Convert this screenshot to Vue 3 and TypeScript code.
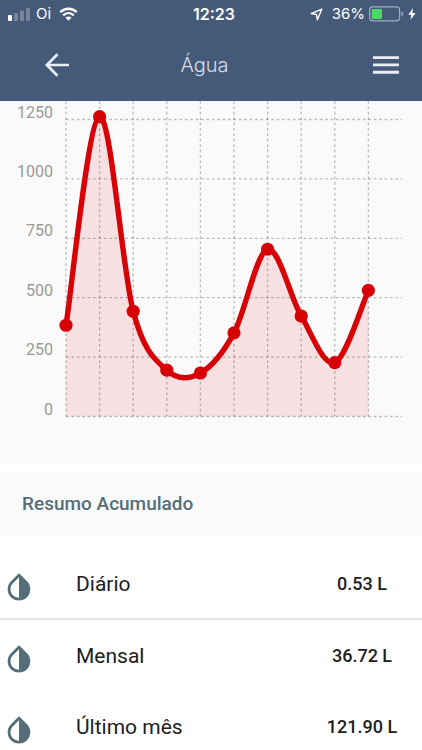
<script setup lang="ts">
interface Point {
  x: number
  y: number
}

interface SummaryRow {
  label: string
  value: string
}

const chart = { left: 66, right: 402, top: 0, base: 315.5, step: 59.4 }
const ticks = [0, 250, 500, 750, 1000, 1250]
const readings = [384, 1262, 443, 195, 183, 352, 704, 423, 227, 531]

const columnWidth = (chart.right - chart.left) / readings.length
const scaleY = (value: number): number => chart.base - (value / 250) * chart.step

const points: Point[] = readings.map((value, i) => ({
  x: chart.left + i * columnWidth,
  y: scaleY(value),
}))

// Catmull-Rom spline through every reading, written as cubic segments
function spline(list: Point[]): string {
  let d = `M${list[0].x},${list[0].y}`
  for (let i = 0; i < list.length - 1; i++) {
    const before = list[Math.max(i - 1, 0)]
    const from = list[i]
    const to = list[i + 1]
    const after = list[Math.min(i + 2, list.length - 1)]
    d += `C${from.x + (to.x - before.x) / 6},${from.y + (to.y - before.y) / 6}`
    d += ` ${to.x - (after.x - from.x) / 6},${to.y - (after.y - from.y) / 6}`
    d += ` ${to.x},${to.y}`
  }
  return d
}

const linePath = spline(points)
const areaPath = `${linePath}V${chart.base}H${chart.left}Z`

const rows: SummaryRow[] = [
  { label: 'Diário', value: '0.53 L' },
  { label: 'Mensal', value: '36.72 L' },
  { label: 'Último mês', value: '121.90 L' },
]
</script>

<template>
  <div class="app">
    <header class="header">
      <div class="status">
        <div class="status-left">
          <svg class="signal" width="22" height="14" viewBox="0 0 22 14" aria-hidden="true">
            <rect x="0" y="8" width="4" height="6" rx="1" fill="#fff" />
            <rect x="6" y="6" width="4" height="8" rx="1" fill="#fff" opacity=".27" />
            <rect x="12" y="3.5" width="4" height="10.5" rx="1" fill="#fff" opacity=".27" />
            <rect x="18" y="1" width="4" height="13" rx="1" fill="#fff" opacity=".27" />
          </svg>
          <span>Oi</span>
          <svg class="wifi" width="19" height="14" viewBox="0 0 19 14" aria-hidden="true">
            <g fill="none" stroke="#fff" stroke-width="2.4">
              <path d="M1.2 5.2C5.9.6 13.1.6 17.8 5.2" />
              <path d="M4.2 8.3C7.3 5.4 11.7 5.4 14.8 8.3" />
            </g>
            <path d="M6.5 10.7C8.3 9.2 10.7 9.2 12.5 10.7L9.5 13.8Z" fill="#fff" />
          </svg>
        </div>
        <span class="clock">12:23</span>
        <div class="status-right">
          <svg width="13" height="13" viewBox="0 0 13 13" aria-hidden="true">
            <path d="M11.8 1.2L1.2 5.6L6.5 6.5L7.3 11.8Z" fill="none" stroke="#fff" stroke-width="1.4" stroke-linejoin="round" />
          </svg>
          <span class="percent">36%</span>
          <svg width="35" height="16" viewBox="0 0 35 16" aria-hidden="true">
            <rect x=".6" y=".9" width="30" height="14" rx="3.4" fill="none" stroke="#fff" stroke-width="1.2" opacity=".5" />
            <rect x="2.6" y="2.9" width="10.4" height="10" rx="1.4" fill="#4cd964" />
            <path d="M32.4 5.6C34.6 6.4 34.6 9.4 32.4 10.2Z" fill="#fff" opacity=".5" />
          </svg>
          <svg width="8" height="12" viewBox="0 0 8 12" aria-hidden="true">
            <path d="M5 0L.4 6.7H3.4L2.4 12L7.6 4.9H4.4Z" fill="#fff" />
          </svg>
        </div>
      </div>
      <nav class="toolbar">
        <button class="icon-button" type="button" aria-label="Voltar">
          <svg width="24" height="24" viewBox="0 0 24 24" aria-hidden="true">
            <path d="M12.5 1.3L1.8 12L12.5 22.7M2 12H24" fill="none" stroke="#e9eef6" stroke-width="2.7" />
          </svg>
        </button>
        <h1 class="title">Água</h1>
        <button class="icon-button" type="button" aria-label="Menu">
          <svg width="26" height="18" viewBox="0 0 26 18" aria-hidden="true">
            <path d="M0 1.6H26M0 8.9H26M0 16.2H26" stroke="#e9eef6" stroke-width="2.9" />
          </svg>
        </button>
      </nav>
    </header>

    <main class="content">
      <section class="chart-card">
        <svg class="chart" viewBox="0 0 422 362" role="img" aria-label="Água">
          <path :d="areaPath" class="area" />
          <g class="grid">
            <line v-for="tick in ticks" :key="'h' + tick" :x1="chart.left" :x2="chart.right" :y1="scaleY(tick)" :y2="scaleY(tick)" />
            <line v-for="point in points" :key="'v' + point.x" :x1="point.x" :x2="point.x" :y1="chart.top" :y2="chart.base" />
          </g>
          <text v-for="tick in ticks" :key="tick" class="tick" x="53" :y="scaleY(tick) - 2">{{ tick }}</text>
          <path :d="linePath" class="line" />
          <circle v-for="point in points" :key="point.x" :cx="point.x" :cy="point.y" r="6.6" class="dot" />
        </svg>
      </section>

      <section class="summary">
        <h2 class="summary-title">Resumo Acumulado</h2>
        <ul class="list">
          <li v-for="row in rows" :key="row.label" class="row">
            <svg class="drop" width="34" height="34" viewBox="0 0 24 24" aria-hidden="true">
              <path
                fill="#546e7a"
                d="M17.66 7.93L12 2.27 6.34 7.93c-3.12 3.12-3.12 8.19 0 11.31C7.9 20.8 9.95 21.58 12 21.58c2.05 0 4.1-.78 5.66-2.34 3.12-3.12 3.12-8.19 0-11.31zM12 19.59c-1.6 0-3.11-.62-4.24-1.76C6.62 16.69 6 15.19 6 13.59s.62-3.11 1.76-4.24L12 5.1v14.49z"
              />
            </svg>
            <span class="row-label">{{ row.label }}</span>
            <span class="row-value">{{ row.value }}</span>
          </li>
        </ul>
      </section>
    </main>
  </div>
</template>

<style>
body {
  margin: 0;
  background: #fff;
}
</style>

<style scoped>
.app {
  display: flex;
  flex-direction: column;
  height: 100vh;
  font-family: Roboto, "Liberation Sans", sans-serif;
  color: #212121;
}

.header {
  flex: none;
  background: #455a79;
  color: #fff;
  font-family: Inter, "Liberation Sans", sans-serif;
}

.status {
  display: grid;
  grid-template-columns: 1fr auto 1fr;
  align-items: center;
  height: 28px;
  padding: 0 6px 0 8px;
  font-size: 16px;
  line-height: 20px;
}

.status-left,
.status-right {
  display: flex;
  align-items: center;
  font-size: 15px;
}

.status-left {
  gap: 6px;
}

.wifi {
  margin-left: 2px;
}

.status-right {
  justify-content: flex-end;
  gap: 4px;
}

.percent {
  margin-left: 5px;
}

.clock {
  padding-left: 4px;
  font-weight: 600;
}

.toolbar {
  display: grid;
  grid-template-columns: 48px 1fr 48px;
  align-items: center;
  height: 73px;
  padding: 0 12px 0 33px;
}

.icon-button {
  display: flex;
  align-items: center;
  justify-content: center;
  height: 48px;
  padding: 0;
  border: 0;
  background: none;
}

.title {
  margin: 0;
  padding-right: 34px;
  text-align: center;
  font-size: 20px;
  line-height: 28px;
  font-weight: 300;
  color: #d5deeb;
}

.content {
  flex: 1;
  min-height: 0;
  overflow-y: auto;
  scrollbar-width: none;
}

.chart-card {
  background: #fafafa;
}

.chart {
  display: block;
  width: 100%;
}

.area {
  fill: #d70206;
  fill-opacity: 0.1;
}

.grid {
  stroke: #000;
  stroke-opacity: 0.25;
  stroke-width: 1.3;
  stroke-dasharray: 2.7;
}

.tick {
  fill: #999;
  font-size: 16px;
  text-anchor: end;
}

.line {
  fill: none;
  stroke: #d70206;
  stroke-width: 5.4;
}

.dot {
  fill: #d70206;
}

.summary {
  margin-top: 10px;
}

.summary-title {
  margin: 0;
  padding: 19px 22px;
  background: #fafafa;
  color: #546e7a;
  font-size: 19px;
  line-height: 24px;
  font-weight: 500;
}

.list {
  margin: 0;
  padding: 14px 0;
  list-style: none;
}

.row {
  display: grid;
  grid-template-columns: 76px 1fr 120px;
  align-items: center;
  box-sizing: border-box;
  height: 71px;
}

.row:first-child {
  border-bottom: 2px solid #e6e6e6;
}

.drop {
  margin-left: 2px;
  padding-top: 6px;
}

.row-label {
  font-size: 21px;
  line-height: 28px;
}

.row-value {
  text-align: center;
  font-size: 18px;
  line-height: 24px;
  font-weight: 500;
}
</style>
